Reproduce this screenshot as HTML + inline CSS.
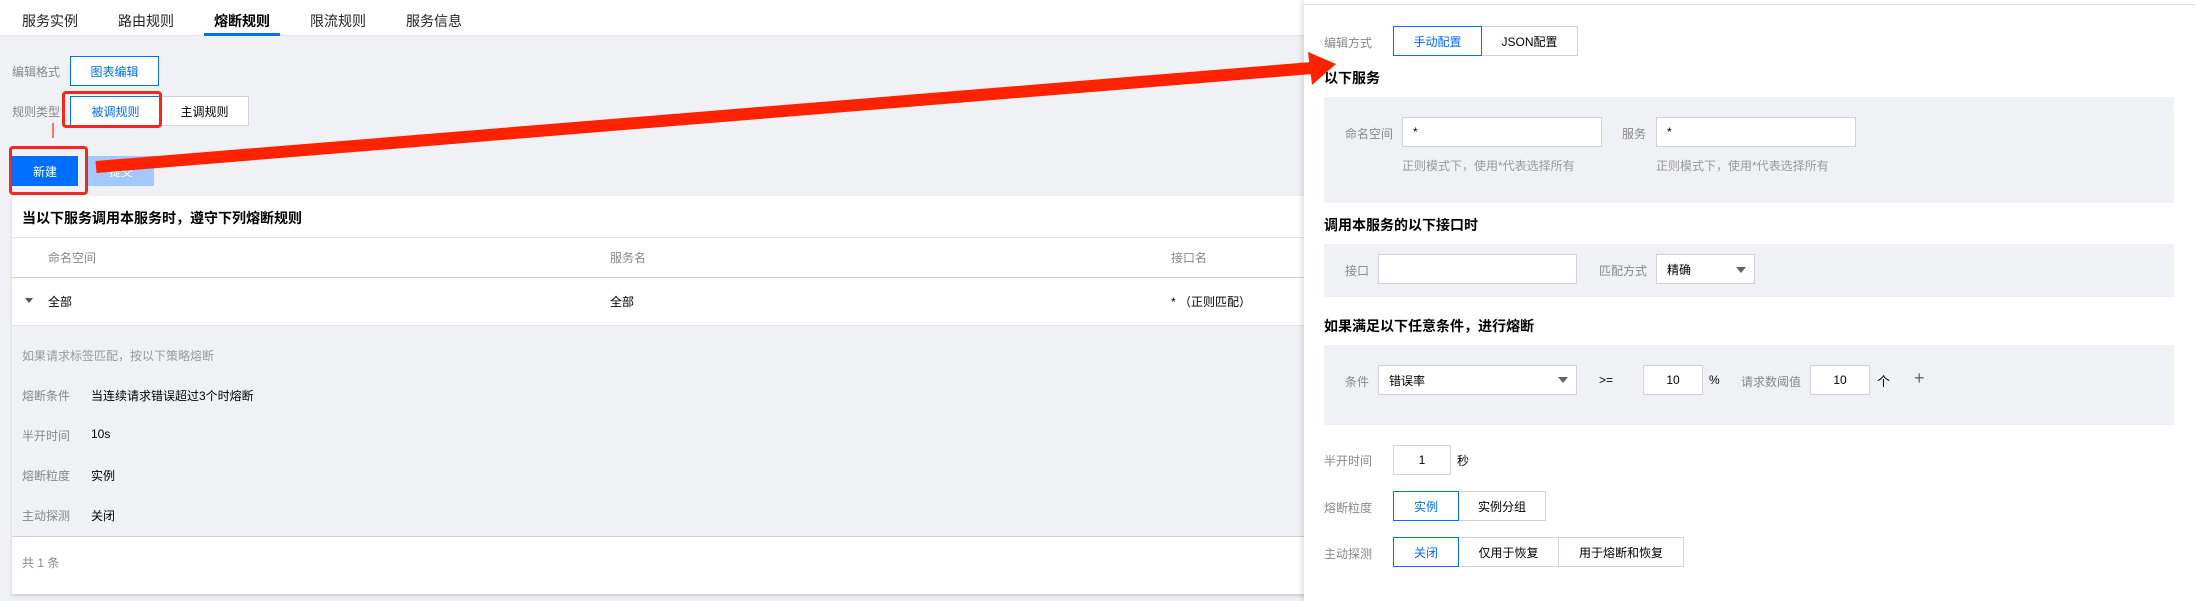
<!DOCTYPE html>
<html><head><meta charset="utf-8"><style>
*{margin:0;padding:0;box-sizing:border-box}
body{width:2197px;height:601px;position:relative;overflow:hidden;background:#fff;font-family:"Liberation Sans","Noto Sans CJK SC",sans-serif;font-size:12px;color:#000}
.a{position:absolute;white-space:nowrap}
.g{color:#888}
.btn{position:absolute;border:1px solid #d0d3da;background:#fff;display:flex;align-items:center;justify-content:center;font-size:12px;color:#000}
.on{border:1px solid #006eff;color:#006eff;z-index:2}
.inp{position:absolute;border:1px solid #d0d3da;background:#fff;height:30px;display:flex;align-items:center;padding-left:10px;font-size:12px}
.box{position:absolute;background:#f0f1f5}
.b14{font-size:14px;font-weight:bold}
.tri{position:absolute;width:0;height:0;border-left:5px solid transparent;border-right:5px solid transparent;border-top:6px solid #666}
</style></head><body>
<div class="a" style="left:0;top:0;width:1304px;height:36px;background:#fff;border-bottom:1px solid #e2e3e8"></div>
<div class="a" style="left:22px;top:11px;font-size:14px;color:#222">服务实例</div>
<div class="a" style="left:118px;top:11px;font-size:14px;color:#222">路由规则</div>
<div class="a" style="left:214px;top:11px;font-size:14px;font-weight:bold">熔断规则</div>
<div class="a" style="left:204px;top:33px;width:76px;height:3px;background:#006eff"></div>
<div class="a" style="left:310px;top:11px;font-size:14px;color:#222">限流规则</div>
<div class="a" style="left:406px;top:11px;font-size:14px;color:#222">服务信息</div>
<div class="a" style="left:0;top:36px;width:1304px;height:565px;background:#f0f1f5"></div>
<div class="a g" style="left:12px;top:63px">编辑格式</div>
<div class="btn on" style="left:70px;top:56px;width:89px;height:30px">图表编辑</div>
<div class="a g" style="left:12px;top:103px">规则类型</div>
<div class="btn on" style="left:70px;top:96px;width:91px;height:30px">被调规则</div>
<div class="btn" style="left:160px;top:96px;width:89px;height:30px">主调规则</div>
<div class="a" style="left:62px;top:91px;width:100px;height:37px;border:3px solid #f0281e;border-radius:4px;z-index:3"></div>
<div class="a" style="left:52px;top:123px;width:2px;height:15px;background:#f57a6e"></div>
<div class="btn" style="left:12px;top:156px;width:66px;height:30px;background:#006eff;border-color:#006eff;color:#fff">新建</div>
<div class="btn" style="left:88px;top:156px;width:66px;height:30px;background:#a3c8fd;border-color:#a3c8fd;color:#fff">提交</div>
<div class="a" style="left:9px;top:146px;width:79px;height:49px;border:3px solid #f0281e;border-radius:4px;z-index:3"></div>
<div class="a" style="left:12px;top:196px;width:1300px;height:398px;background:#fff;box-shadow:0 2px 3px rgba(0,0,0,.15)"></div>
<div class="a b14" style="left:22px;top:208px">当以下服务调用本服务时，遵守下列熔断规则</div>
<div class="a" style="left:12px;top:237px;width:1292px;height:1px;background:#e2e3e8"></div>
<div class="a g" style="left:48px;top:249px">命名空间</div>
<div class="a g" style="left:610px;top:249px">服务名</div>
<div class="a g" style="left:1171px;top:249px">接口名</div>
<div class="a" style="left:12px;top:277px;width:1292px;height:1px;background:#cfd2da"></div>
<div class="tri" style="left:25px;top:298px;border-top-color:#555;border-left-width:4px;border-right-width:4px;border-top-width:5px"></div>
<div class="a" style="left:48px;top:293px">全部</div>
<div class="a" style="left:610px;top:293px">全部</div>
<div class="a" style="left:1171px;top:293px">* （正则匹配）</div>
<div class="a" style="left:12px;top:325px;width:1292px;height:212px;background:#f0f1f5;border-top:1px solid #e2e3e8;border-bottom:1px solid #d0d3da"></div>
<div class="a g" style="left:22px;top:347px;color:#999">如果请求标签匹配，按以下策略熔断</div>
<div class="a g" style="left:22px;top:387px">熔断条件</div><div class="a" style="left:91px;top:387px">当连续请求错误超过3个时熔断</div>
<div class="a g" style="left:22px;top:427px">半开时间</div><div class="a" style="left:91px;top:427px">10s</div>
<div class="a g" style="left:22px;top:467px">熔断粒度</div><div class="a" style="left:91px;top:467px">实例</div>
<div class="a g" style="left:22px;top:507px">主动探测</div><div class="a" style="left:91px;top:507px">关闭</div>
<div class="a g" style="left:22px;top:554px">共 1 条</div>
<div class="a" style="left:1304px;top:0;width:893px;height:601px;background:#fff;box-shadow:-3px 0 4px rgba(0,0,0,.1)"></div>
<div class="a" style="left:1304px;top:4px;width:891px;height:1px;background:#dfe0e5"></div>
<div class="a g" style="left:1324px;top:34px">编辑方式</div>
<div class="btn on" style="left:1393px;top:26px;width:89px;height:30px">手动配置</div>
<div class="btn" style="left:1481px;top:26px;width:97px;height:30px">JSON配置</div>
<div class="a b14" style="left:1324px;top:68px">以下服务</div>
<div class="box" style="left:1324px;top:97px;width:850px;height:106px"></div>
<div class="a g" style="left:1345px;top:125px">命名空间</div>
<div class="inp" style="left:1402px;top:117px;width:200px">*</div>
<div class="a g" style="left:1622px;top:125px">服务</div>
<div class="inp" style="left:1656px;top:117px;width:200px">*</div>
<div class="a g" style="left:1402px;top:157px;color:#999">正则模式下，使用*代表选择所有</div>
<div class="a g" style="left:1656px;top:157px;color:#999">正则模式下，使用*代表选择所有</div>
<div class="a b14" style="left:1324px;top:215px">调用本服务的以下接口时</div>
<div class="box" style="left:1324px;top:244px;width:850px;height:53px"></div>
<div class="a g" style="left:1345px;top:262px">接口</div>
<div class="inp" style="left:1378px;top:254px;width:199px"></div>
<div class="a g" style="left:1599px;top:262px">匹配方式</div>
<div class="inp" style="left:1656px;top:254px;width:99px">精确</div>
<div class="tri" style="left:1736px;top:267px"></div>
<div class="a b14" style="left:1324px;top:316px">如果满足以下任意条件，进行熔断</div>
<div class="box" style="left:1324px;top:345px;width:850px;height:80px"></div>
<div class="a g" style="left:1345px;top:373px">条件</div>
<div class="inp" style="left:1378px;top:365px;width:199px">错误率</div>
<div class="tri" style="left:1558px;top:377px"></div>
<div class="a" style="left:1599px;top:373px">&gt;=</div>
<div class="inp" style="left:1643px;top:365px;width:60px;padding:0;justify-content:center">10</div>
<div class="a" style="left:1709px;top:373px">%</div>
<div class="a g" style="left:1741px;top:373px">请求数阈值</div>
<div class="inp" style="left:1810px;top:365px;width:60px;padding:0;justify-content:center">10</div>
<div class="a" style="left:1877px;top:371px;font-size:13px">个</div>
<div class="a" style="left:1914px;top:368px;font-size:18px;color:#666">+</div>
<div class="a g" style="left:1324px;top:452px">半开时间</div>
<div class="inp" style="left:1393px;top:445px;width:58px;padding:0;justify-content:center">1</div>
<div class="a" style="left:1457px;top:452px">秒</div>
<div class="a g" style="left:1324px;top:499px">熔断粒度</div>
<div class="btn on" style="left:1393px;top:491px;width:66px;height:30px">实例</div>
<div class="btn" style="left:1458px;top:491px;width:88px;height:30px">实例分组</div>
<div class="a g" style="left:1324px;top:545px">主动探测</div>
<div class="btn on" style="left:1393px;top:537px;width:66px;height:30px">关闭</div>
<div class="btn" style="left:1458px;top:537px;width:101px;height:30px">仅用于恢复</div>
<div class="btn" style="left:1558px;top:537px;width:126px;height:30px">用于熔断和恢复</div>
<svg class="a" style="left:0;top:0;z-index:10" width="2197" height="601">
<line x1="96" y1="167" x2="1312" y2="68" stroke="#ff2200" stroke-width="12"/>
<polygon points="1336,64 1308,52 1312,85" fill="#ff2200"/>
</svg>
</body></html>
